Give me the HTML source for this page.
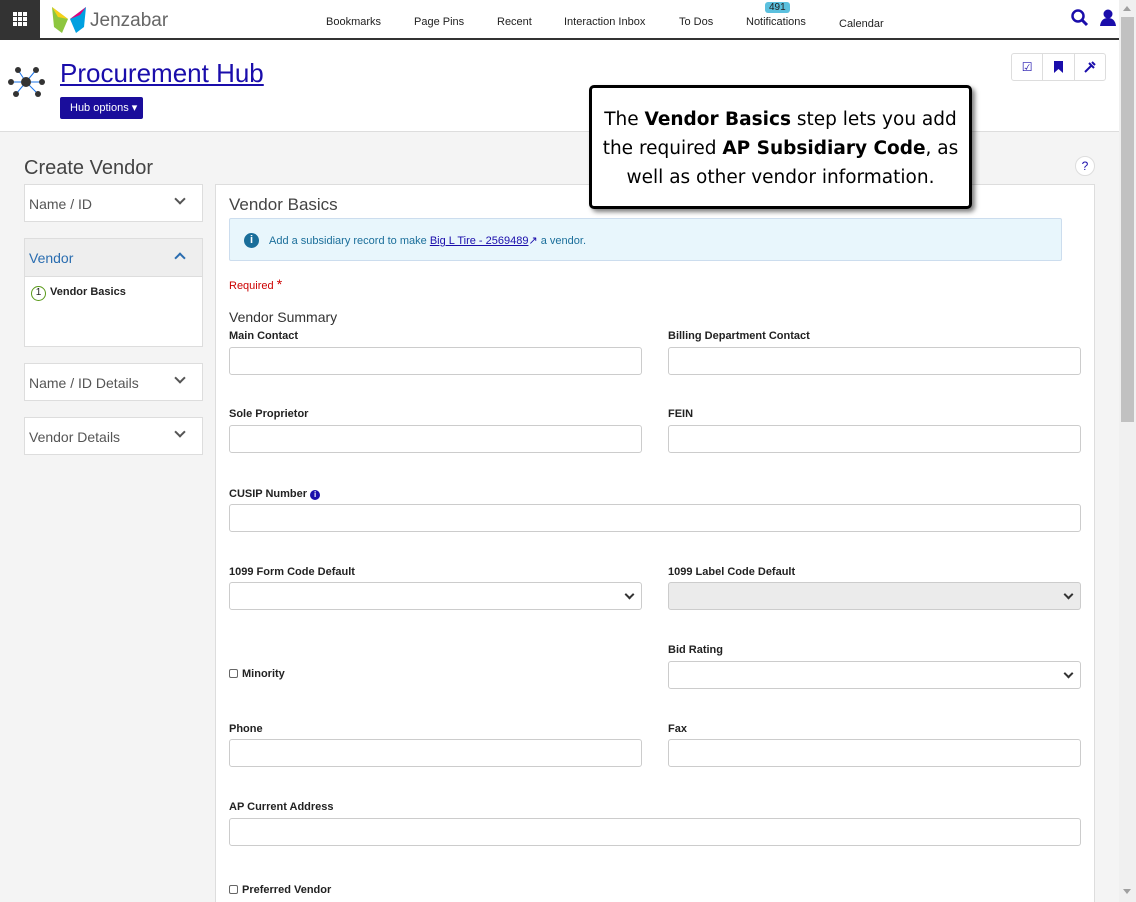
<!DOCTYPE html>
<html style="overflow:hidden;height:902px"><head><style>
*{box-sizing:border-box}
body{margin:0;width:1136px;height:902px;overflow:hidden;font-family:"Liberation Sans",sans-serif;background:#f4f4f4;position:relative}
.nav{position:absolute;left:0;top:0;width:1119px;height:40px;background:#fff;border-bottom:2px solid #333}
.grid{position:absolute;left:0;top:0;width:40px;height:38px;background:#333}
.nav a{position:absolute;top:16px;font-size:11px;color:#222}
.hdr{position:absolute;left:0;top:40px;width:1119px;height:92px;background:#fff;border-bottom:1px solid #ddd}
.sb{position:absolute;left:1119px;top:0;width:17px;height:902px;background:#f0f0f0}
.acc{position:absolute;left:24px;width:179px;background:#fff;border:1px solid #ddd;font-size:14px;color:#555}
.chev{position:absolute;right:18px;top:10px;width:8px;height:8px;border-right:2.5px solid #555;border-bottom:2.5px solid #555;transform:rotate(45deg)}
.panel{position:absolute;left:215px;top:184px;width:880px;height:730px;background:#fff;border:1px solid #ddd}
.lbl{position:absolute;font-size:11px;font-weight:bold;color:#222}
.in{position:absolute;height:28px;border:1px solid #ccc;border-radius:3px;background:#fff}
.sel::after{content:"";position:absolute;right:8px;top:8px;width:5px;height:5px;border-right:2px solid #333;border-bottom:2px solid #333;transform:rotate(45deg)}
.cb{display:inline-block;width:9px;height:9px;border:1px solid #666;border-radius:2px;vertical-align:-1px;margin-right:4px}
</style></head><body>
<div class="nav">
<div class="grid"><svg width="40" height="38"><g fill="#fff"><rect x="13" y="12" width="4" height="4"/><rect x="18" y="12" width="4" height="4"/><rect x="23" y="12" width="4" height="4"/><rect x="13" y="17" width="4" height="4"/><rect x="18" y="17" width="4" height="4"/><rect x="23" y="17" width="4" height="4"/><rect x="13" y="22" width="4" height="4"/><rect x="18" y="22" width="4" height="4"/><rect x="23" y="22" width="4" height="4"/></g></svg></div>
<svg style="position:absolute;left:50px;top:5px" width="40" height="30"><path d="M2 2 L18 14 L12 28 L4 22Z" fill="#8dc63f"/><path d="M2 2 L18 14 L8 12Z" fill="#f7d117"/><path d="M36 2 L20 14 L26 28 L34 22Z" fill="#00a0e0"/><path d="M36 2 L20 14 L30 10Z" fill="#e4007c"/></svg>
<div style="position:absolute;left:90px;top:10px;font-size:19px;color:#666">Jenzabar</div>
<a style="left:326px">Bookmarks</a><a style="left:414px">Page Pins</a><a style="left:497px">Recent</a><a style="left:564px">Interaction Inbox</a><a style="left:679px">To Dos</a><a style="left:746px">Notifications</a><a style="left:839px;top:18px">Calendar</a>
<div style="position:absolute;left:765px;top:2px;background:#5bc0de;color:#222;font-size:10px;padding:0 4px;border-radius:3px">491</div>
<svg style="position:absolute;left:1071px;top:9px" width="18" height="18"><circle cx="7" cy="7" r="5.5" fill="none" stroke="#1a0dab" stroke-width="2.5"/><path d="M11 11 L16 16" stroke="#1a0dab" stroke-width="3"/></svg>
<svg style="position:absolute;left:1099px;top:9px" width="18" height="18"><circle cx="9" cy="5" r="4.5" fill="#1a0dab"/><path d="M1 17 Q2 9 9 9 Q16 9 17 17Z" fill="#1a0dab"/></svg>
</div>
<div class="hdr">
<svg style="position:absolute;left:8px;top:24px" width="38" height="38"><g stroke="#1a73e8" stroke-width="1"><path d="M18 18L10 6M18 18L28 6M18 18L3 18M18 18L34 18M18 18L8 30M18 18L30 30"/></g><g fill="#333"><circle cx="18" cy="18" r="5"/><circle cx="10" cy="6" r="3"/><circle cx="28" cy="6" r="3"/><circle cx="3" cy="18" r="3"/><circle cx="34" cy="18" r="3"/><circle cx="8" cy="30" r="3"/><circle cx="30" cy="30" r="3"/></g></svg>
<div style="position:absolute;left:60px;top:18px;font-size:26px;color:#1a0dab;text-decoration:underline">Procurement Hub</div>
<div style="position:absolute;left:60px;top:57px;width:83px;height:22px;background:#1a0d9b;border-radius:2px;color:#fff;font-size:11px;line-height:22px;padding-left:10px">Hub options ▾</div>
<div style="position:absolute;left:1011px;top:13px;width:95px;height:28px;border:1px solid #ddd;border-radius:3px;display:flex">
<div style="flex:1;border-right:1px solid #ddd;text-align:center;line-height:26px;color:#1a0dab;font-size:12px">☑</div><div style="flex:1;border-right:1px solid #ddd;position:relative"><svg style="position:absolute;left:11px;top:7px" width="9" height="12"><path d="M0 0H9V12L4.5 8L0 12Z" fill="#1a0dab"/></svg></div><div style="flex:1;position:relative"><svg style="position:absolute;left:8px;top:6px" width="14" height="14"><path d="M2 12L8 6M6 3L11 8M9 2L12 5" stroke="#1a0dab" stroke-width="2"/></svg></div></div>
</div>
<div style="position:absolute;left:24px;top:157px;font-size:20px;color:#444">Create Vendor</div>
<div style="position:absolute;left:1075px;top:156px;width:20px;height:20px;border-radius:50%;background:#fff;border:1px solid #ddd;text-align:center;font-size:12px;line-height:18px;color:#1a0dab">?</div>
<div class="acc" style="top:184px;height:38px;padding:11px 4px">Name / ID<div class="chev"></div></div>
<div class="acc" style="top:238px;height:109px"><div style="background:#eee;height:38px;border-bottom:1px solid #ddd;padding:11px 4px;color:#2a6db0;position:relative">Vendor<div class="chev" style="border-color:#2a6db0;transform:rotate(225deg);top:15px"></div></div>
<div style="padding:9px 6px;font-size:11px;font-weight:bold;color:#222"><span style="display:inline-block;width:15px;height:15px;border:1.5px solid #5a9a1a;border-radius:50%;font-size:10px;text-align:center;line-height:12px;font-weight:normal;margin-right:4px">1</span>Vendor Basics</div></div>
<div class="acc" style="top:363px;height:38px;padding:11px 4px">Name / ID Details<div class="chev"></div></div>
<div class="acc" style="top:417px;height:38px;padding:11px 4px">Vendor Details<div class="chev"></div></div>
<div class="panel"></div>
<div style="position:absolute;left:229px;top:195px;font-size:17px;color:#444">Vendor Basics</div>
<div style="position:absolute;left:229px;top:218px;width:833px;height:43px;background:#e8f6fc;border:1px solid #cde;border-radius:2px;font-size:11px;color:#1a6e9a;padding:15px 0 0 39px">
<div style="position:absolute;left:14px;top:14px;width:15px;height:15px;border-radius:50%;background:#1a6e9a;color:#fff;font-size:11px;font-weight:bold;text-align:center;line-height:15px">i</div>
Add a subsidiary record to make <u style="color:#1a0dab">Big L Tire - 2569489</u><span style="color:#1a0dab">↗</span> a vendor.</div>
<div style="position:absolute;left:229px;top:276px;font-size:11px;color:#c00">Required <span style="font-size:14px">*</span></div>
<div style="position:absolute;left:229px;top:309px;font-size:14px;color:#333">Vendor Summary</div>
<div class="lbl" style="left:229px;top:330px">Main Contact</div><div class="lbl" style="left:668px;top:330px">Billing Department Contact</div>
<div class="in" style="left:229px;top:347px;width:413px"></div><div class="in" style="left:668px;top:347px;width:413px"></div>
<div class="lbl" style="left:229px;top:408px">Sole Proprietor</div><div class="lbl" style="left:668px;top:408px">FEIN</div>
<div class="in" style="left:229px;top:425px;width:413px"></div><div class="in" style="left:668px;top:425px;width:413px"></div>
<div class="lbl" style="left:229px;top:488px">CUSIP Number <span style="display:inline-block;width:10px;height:10px;border-radius:50%;background:#1a0dab;color:#fff;font-size:8px;text-align:center;line-height:10px">i</span></div>
<div class="in" style="left:229px;top:504px;width:852px"></div>
<div class="lbl" style="left:229px;top:566px">1099 Form Code Default</div><div class="lbl" style="left:668px;top:566px">1099 Label Code Default</div>
<div class="in sel" style="left:229px;top:582px;width:413px"></div><div class="in sel" style="left:668px;top:582px;width:413px;background:#ebebeb"></div>
<div class="lbl" style="left:668px;top:644px">Bid Rating</div>
<div class="lbl" style="left:229px;top:668px"><span class="cb"></span>Minority</div>
<div class="in sel" style="left:668px;top:661px;width:413px"></div>
<div class="lbl" style="left:229px;top:723px">Phone</div><div class="lbl" style="left:668px;top:723px">Fax</div>
<div class="in" style="left:229px;top:739px;width:413px"></div><div class="in" style="left:668px;top:739px;width:413px"></div>
<div class="lbl" style="left:229px;top:801px">AP Current Address</div>
<div class="in" style="left:229px;top:818px;width:852px"></div>
<div class="lbl" style="left:229px;top:884px"><span class="cb"></span>Preferred Vendor</div>
<div style="position:absolute;left:589px;top:85px;width:383px;height:124px;background:#fff;border:3px solid #000;border-radius:5px;box-shadow:3px 3px 5px rgba(0,0,0,.5);font-family:'DejaVu Sans',sans-serif;font-size:18.5px;line-height:29px;text-align:center;padding-top:17px;color:#000">The <b>Vendor Basics</b> step lets you add the required <b>AP Subsidiary Code</b>, as well as other vendor information.</div>
<div class="sb"><div style="position:absolute;left:2px;top:17px;width:13px;height:405px;background:#c1c1c1"></div><div style="position:absolute;left:4px;top:6px;border:4px solid transparent;border-bottom:5px solid #a0a0a0;border-top:0"></div><div style="position:absolute;left:4px;top:889px;border:4px solid transparent;border-top:5px solid #a0a0a0;border-bottom:0"></div></div>
</body></html>
